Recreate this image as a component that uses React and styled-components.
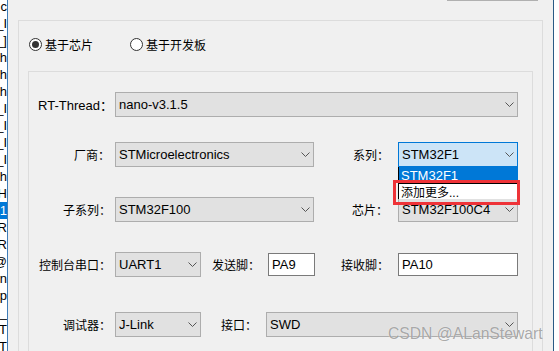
import React from 'react';
import styled, { createGlobalStyle } from 'styled-components';

const GlobalStyle = createGlobalStyle`
  html, body {
    margin: 0;
    padding: 0;
    background: #ffffff;
  }
  body {
    font-family: "Liberation Sans", "Noto Sans CJK SC", sans-serif;
    font-size: 13px;
    color: #000000;
  }
`;

const Screen = styled.div`
  position: relative;
  display: flex;
  width: 559px;
  height: 351px;
  overflow: hidden;
  background: #ffffff;
`;

const SideList = styled.div`
  flex: none;
  width: 7px;
  display: flex;
  flex-direction: column;
  overflow: hidden;
  background: #ffffff;
  border-right: 1px solid #3f7db8;
`;

const SideLine = styled.div`
  flex: none;
  height: 17px;
  display: flex;
  justify-content: flex-end;
  align-items: center;
  white-space: nowrap;
  background: ${(p) => (p.$sel ? '#0078d7' : 'transparent')};
  color: ${(p) => (p.$sel ? '#ffffff' : '#000000')};

  &:first-child {
    margin-top: -2px;
  }

  span {
    flex: none;
  }
`;

const Main = styled.div`
  flex: none;
  width: 545px;
  display: flex;
  flex-direction: column;
  background: #f0f0f0;
  overflow: hidden;
`;

const TopStub = styled.div`
  flex: none;
  margin-left: 439px;
  width: 91px;
  height: 1px;
  background: #b0b0b0;
`;

const OuterBox = styled.div`
  flex: 1;
  margin: 19px 10px 0;
  display: flex;
  flex-direction: column;
  border: 1px solid #dcdcdc;
  border-bottom: none;
`;

const RadioRow = styled.div`
  flex: none;
  display: flex;
  align-items: center;
  gap: 37px;
  height: 20px;
  margin-top: 13px;
  padding-left: 10px;
`;

const RadioItem = styled.label`
  display: flex;
  align-items: center;
  gap: 3px;
  font-size: 12px;
`;

const RadioDot = styled.span`
  width: 13px;
  height: 13px;
  box-sizing: border-box;
  border-radius: 50%;
  border: 1px solid #333333;
  background: #ffffff;
  display: flex;
  align-items: center;
  justify-content: center;

  &::after {
    content: '';
    display: ${(p) => (p.$checked ? 'block' : 'none')};
    width: 7px;
    height: 7px;
    border-radius: 50%;
    background: #333333;
  }
`;

const GroupBox = styled.div`
  flex: 1;
  margin: 17px 9px 0;
  display: flex;
  flex-direction: column;
  border: 1px solid #dcdcdc;
  border-bottom: none;
`;

const FormRow = styled.div`
  flex: none;
  display: flex;
  align-items: center;
  height: 25px;
  margin-top: ${(p) => p.$top}px;
`;

const Label = styled.span`
  flex: none;
  width: ${(p) => p.$w}px;
  padding-right: ${(p) => p.$pad}px;
  box-sizing: border-box;
  text-align: right;
  white-space: nowrap;
  font-size: ${(p) => p.$size || 12}px;
`;

const Combo = styled.div`
  position: relative;
  flex: none;
  width: ${(p) => p.$w}px;
  height: 25px;
  box-sizing: border-box;
  display: flex;
  align-items: center;
  padding-left: 3px;
  border: 1px solid ${(p) => (p.$focus ? '#0078d7' : '#adadad')};
  background: ${(p) => (p.$focus ? '#cce4f7' : '#e1e1e1')};
`;

const ComboText = styled.span`
  flex: 1;
  white-space: nowrap;
  overflow: hidden;
`;

const Chevron = styled.svg`
  flex: none;
  margin-right: 3px;
`;

const TextBox = styled.div`
  flex: none;
  width: ${(p) => p.$w}px;
  height: 23px;
  box-sizing: border-box;
  display: flex;
  align-items: center;
  padding-left: 3px;
  border: 1px solid #7a7a7a;
  background: #ffffff;
`;

const DropList = styled.div`
  position: absolute;
  top: calc(100% + 1px);
  left: -1px;
  right: -1px;
  z-index: 5;
  background: #ffffff;
  border-left: 1px solid #000000;
`;

const DropItem = styled.div`
  height: 16px;
  box-sizing: border-box;
  display: flex;
  align-items: center;
  padding-left: 2px;
  white-space: nowrap;
  font-size: ${(p) => (p.$cjk ? 12 : 13)}px;
  background: ${(p) => (p.$sel ? '#0078d7' : '#ffffff')};
  color: ${(p) => (p.$sel ? '#ffffff' : '#000000')};
  border-top: ${(p) => (p.$sel ? 'none' : '1px solid #000000')};
`;

const RedMark = styled.div`
  position: absolute;
  left: -6px;
  top: 13px;
  width: 127px;
  height: 25px;
  box-sizing: border-box;
  border: 3px solid #ee3338;
  pointer-events: none;
`;

const RightEdge = styled.div`
  flex: none;
  width: 5px;
  border-left: 1px solid #2a5a85;
  background: #ffffff;
`;

const Watermark = styled.div`
  position: absolute;
  left: 388px;
  top: 325px;
  font-family: "Liberation Sans", sans-serif;
  font-size: 15.7px;
  white-space: nowrap;
  color: rgba(115, 115, 115, 0.62);
  text-shadow: 0 0 1px rgba(255, 255, 255, 0.9);
  pointer-events: none;
`;

const sideLines = [
  'main.c', 'RT_I', 'RTT_]', 'rtconfig.oh', 'board.oh', 'drv.oh', 'RT_I', 'RT_I',
  'RT_I', 'RT_I', 'gpio.oh', 'usart.oH', 'STM32F1', 'STM32IR', 'STM32IR', 'ALIGN(1@',
  'return', 'Op', 'RT_', 'RT_T', 'RT_T',
];

const ChevronIcon = () => (
  <Chevron width="9" height="5" viewBox="0 0 9 5">
    <polyline points="0.5,0.5 4.5,4.5 8.5,0.5" fill="none" stroke="#555555" strokeWidth="1" />
  </Chevron>
);

const Select = ({ w, value, focus, children }) => (
  <Combo $w={w} $focus={focus}>
    <ComboText>{value}</ComboText>
    <ChevronIcon />
    {children}
  </Combo>
);

const App = () => {
  return (
    <>
      <GlobalStyle />
      <Screen>
        <SideList>
          {sideLines.map((text, i) => (
            <SideLine key={i} $sel={i === 12}>
              <span>{text}</span>
            </SideLine>
          ))}
        </SideList>

        <Main>
          <TopStub />
          <OuterBox>
            <RadioRow>
              <RadioItem>
                <RadioDot $checked />
                基于芯片
              </RadioItem>
              <RadioItem>
                <RadioDot />
                基于开发板
              </RadioItem>
            </RadioRow>

            <GroupBox>
              <FormRow $top={20}>
                <Label $w={86} $pad={2} $size={13}>RT-Thread：</Label>
                <Select w={403} value="nano-v3.1.5" />
              </FormRow>

              <FormRow $top={25}>
                <Label $w={86} $pad={5}>厂商：</Label>
                <Select w={199} value="STMicroelectronics" />
                <Label $w={84} $pad={9}>系列：</Label>
                <Select w={120} value="STM32F1" focus>
                  <DropList>
                    <DropItem $sel>STM32F1</DropItem>
                    <DropItem $cjk>添加更多...</DropItem>
                    <RedMark />
                  </DropList>
                </Select>
              </FormRow>

              <FormRow $top={30}>
                <Label $w={86} $pad={4}>子系列：</Label>
                <Select w={199} value="STM32F100" />
                <Label $w={84} $pad={10}>芯片：</Label>
                <Select w={120} value="STM32F100C4" />
              </FormRow>

              <FormRow $top={30}>
                <Label $w={86} $pad={4}>控制台串口：</Label>
                <Select w={86} value="UART1" />
                <Label $w={67} $pad={8}>发送脚：</Label>
                <TextBox $w={47}>PA9</TextBox>
                <Label $w={83} $pad={9}>接收脚：</Label>
                <TextBox $w={120}>PA10</TextBox>
              </FormRow>

              <FormRow $top={35}>
                <Label $w={86} $pad={4}>调试器：</Label>
                <Select w={86} value="J-Link" />
                <Label $w={65} $pad={9}>接口：</Label>
                <Select w={252} value="SWD" />
              </FormRow>
            </GroupBox>
          </OuterBox>
        </Main>

        <RightEdge />
        <Watermark>CSDN @ALanStewart</Watermark>
      </Screen>
    </>
  );
};

export default App;
